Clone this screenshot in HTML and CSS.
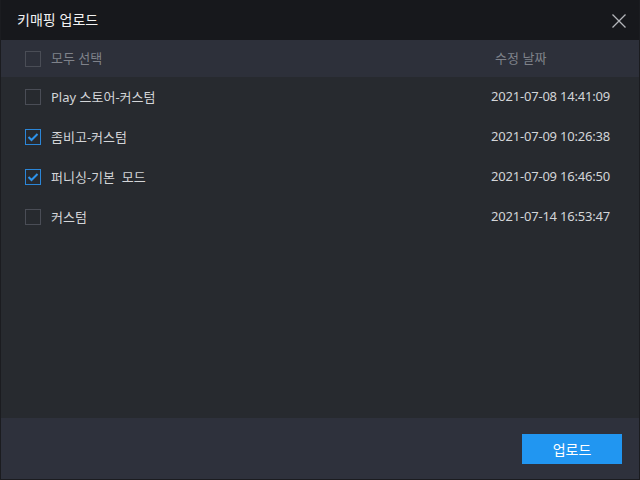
FILE: index.html
```html
<!DOCTYPE html>
<html lang="ko">
<head>
<meta charset="utf-8">
<link rel="stylesheet" href="styles.css">
</head>
<body>
<div class="dialog">
  <div class="titlebar">
    <span class="title">키매핑 업로드</span>
    <svg class="close" width="16" height="16" viewBox="0 0 16 16"><path d="M1.5 1.5 L14.5 14.5 M14.5 1.5 L1.5 14.5" stroke="#b4b6ba" stroke-width="1.3" fill="none"/></svg>
  </div>
  <div class="head row">
    <span class="box"></span>
    <span class="name">모두 선택</span>
    <span class="date hdate">수정 날짜</span>
  </div>
  <div class="list">
    <div class="row item">
      <span class="box"></span>
      <span class="name">Play 스토어-커스텀</span>
      <span class="date">2021-07-08 14:41:09</span>
    </div>
    <div class="row item">
      <span class="box on"><svg width="12" height="10" viewBox="0 0 12 10"><path d="M1.5 5 L4.5 8 L10.5 2" stroke="#2d93ec" stroke-width="2" fill="none"/></svg></span>
      <span class="name">좀비고-커스텀</span>
      <span class="date">2021-07-09 10:26:38</span>
    </div>
    <div class="row item">
      <span class="box on"><svg width="12" height="10" viewBox="0 0 12 10"><path d="M1.5 5 L4.5 8 L10.5 2" stroke="#2d93ec" stroke-width="2" fill="none"/></svg></span>
      <span class="name">퍼니싱-기본&nbsp; 모드</span>
      <span class="date">2021-07-09 16:46:50</span>
    </div>
    <div class="row item">
      <span class="box"></span>
      <span class="name">커스텀</span>
      <span class="date">2021-07-14 16:53:47</span>
    </div>
  </div>
  <div class="footer">
    <button class="upload">업로드</button>
  </div>
</div>
</body>
</html>
```
FILE: styles.css
```css
html, body {
  margin: 0;
  padding: 0;
  background: #1b1c20;
}
body {
  font-family: "Noto Sans", "Noto Sans CJK KR", sans-serif;
  font-size: 13px;
}
.dialog {
  width: 638px;
  height: 479px;
  margin-left: 1px;
  display: flex;
  flex-direction: column;
  background: #272a2f;
}
.titlebar {
  height: 40px;
  background: #17181c;
  display: flex;
  align-items: center;
  justify-content: space-between;
  padding: 0 12px 0 16px;
}
.title {
  color: #f2f2f2;
  font-size: 14px;
  font-family: "Noto Sans CJK KR", sans-serif;
  position: relative;
  top: -1px;
}
.close {
  position: relative;
  top: 1px;
}
.row {
  display: flex;
  align-items: center;
  padding-left: 24px;
}
.head {
  height: 37px;
  background: #2d303a;
  color: #7f828a;
}
.item {
  height: 40px;
  color: #d3d5d8;
}
.list {
  flex: 1;
}
.box {
  width: 14px;
  height: 14px;
  border: 1px solid #4a4d56;
  display: flex;
  align-items: center;
  justify-content: center;
  flex: none;
}
.box.on {
  border-color: #2b86d8;
}
.name {
  margin-left: 10px;
  flex: 1;
  font-family: "Noto Sans", "Noto Sans CJK KR", sans-serif;
  position: relative;
  top: -1px;
}
.date {
  width: 148px;
  font-family: "Noto Sans", sans-serif;
  letter-spacing: -0.2px;
  position: relative;
  top: -1px;
}
.hdate {
  font-family: "Noto Sans CJK KR", sans-serif;
  letter-spacing: 0;
  padding-left: 4px;
  width: 144px;
}
.footer {
  height: 61px;
  background: #2e313c;
  display: flex;
  align-items: center;
  justify-content: flex-end;
  padding-right: 17px;
}
.upload {
  width: 100px;
  height: 30px;
  background: #2196f1;
  border: none;
  color: #ffffff;
  font-family: "Noto Sans CJK KR", sans-serif;
  font-size: 14px;
  padding: 0;
}
```
